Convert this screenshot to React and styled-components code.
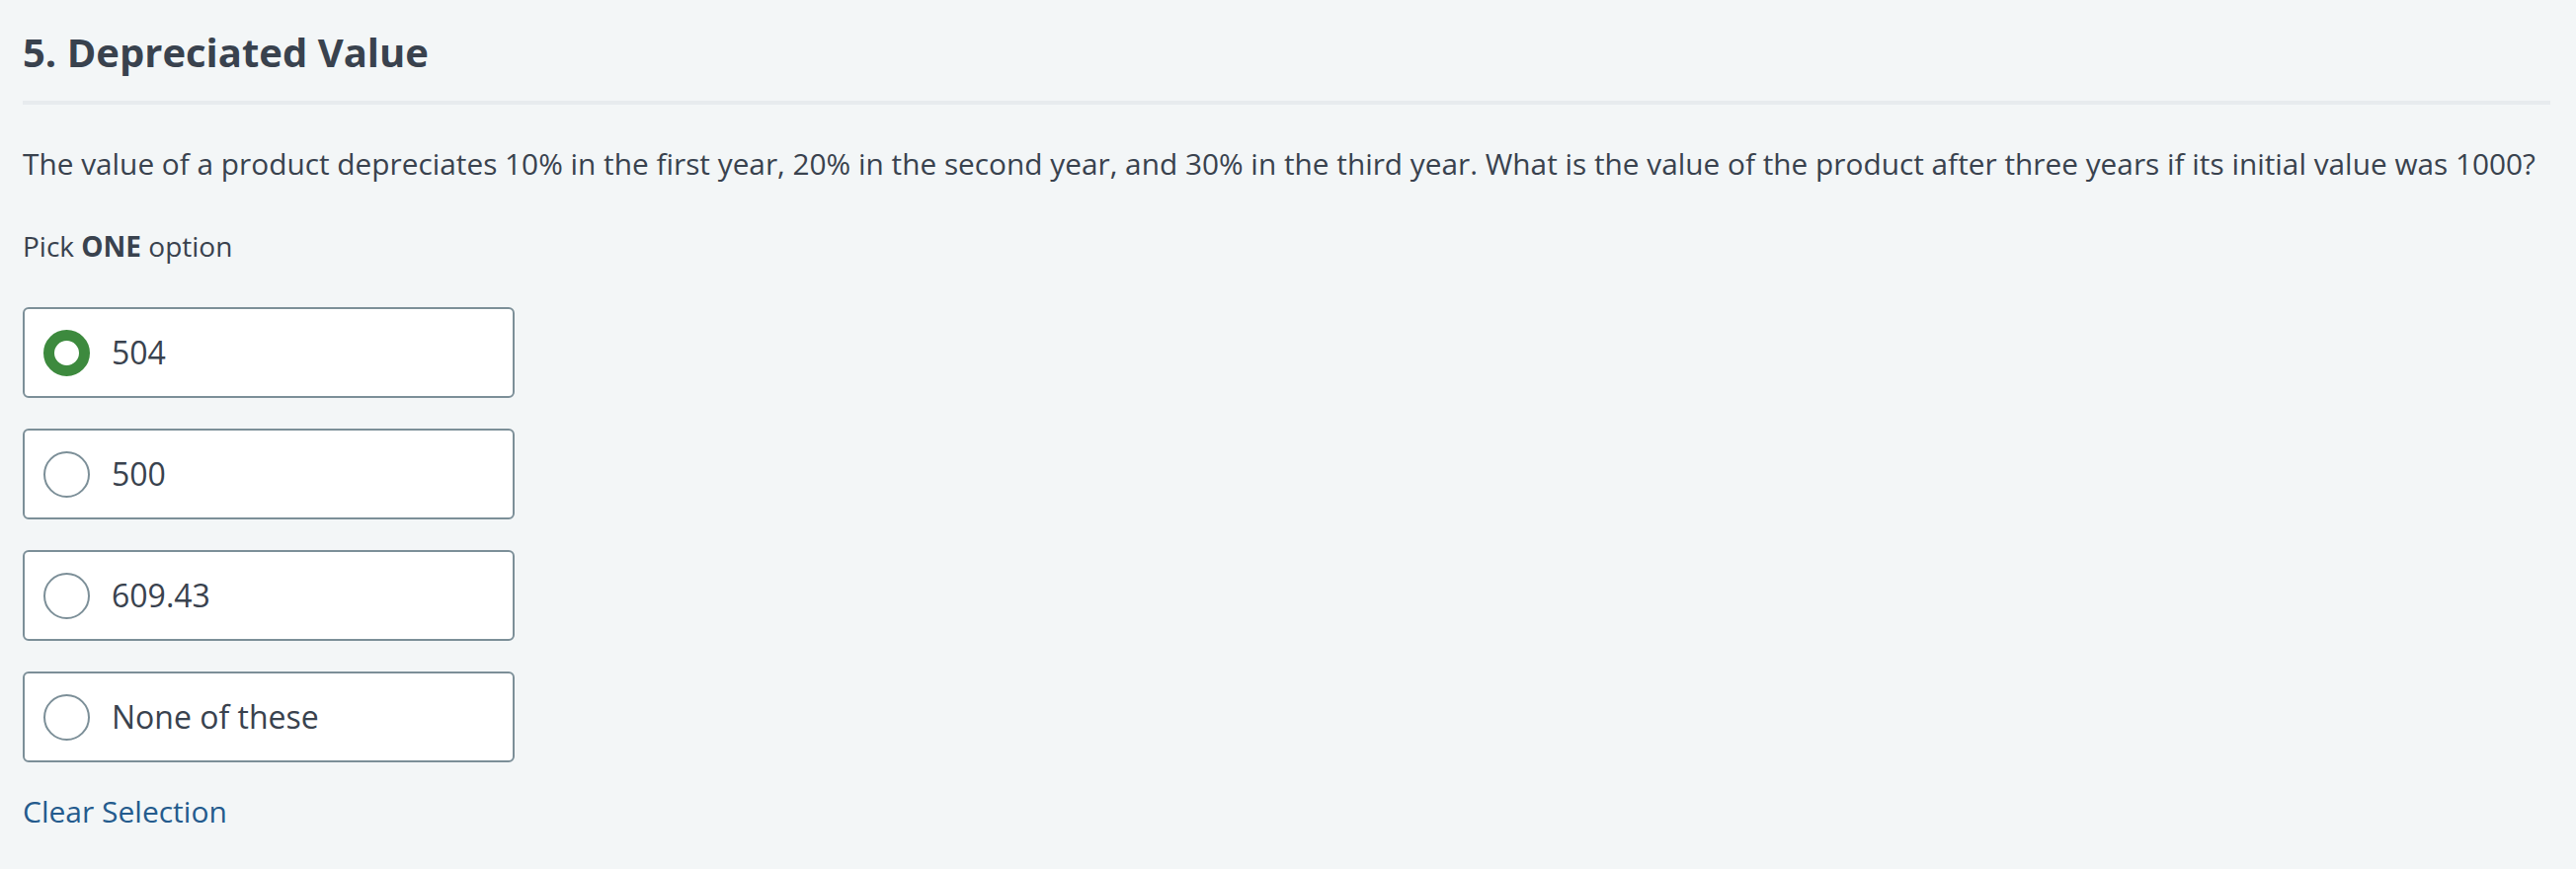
import React, { useState } from "react";
import styled, { createGlobalStyle } from "styled-components";

const GlobalStyle = createGlobalStyle`
  html, body {
    margin: 0;
    padding: 0;
    background: #f3f6f7;
  }
  body {
    font-family: "Open Sans", "Noto Sans", sans-serif;
    color: #39424e;
  }
`;

const Page = styled.div`
  padding: 29px 22px 40px 23px;
  background: #f3f6f7;
  min-height: 880px;
  box-sizing: border-box;
`;

const Header = styled.div`
  padding-bottom: 25px;
  border-bottom: 4px solid #e7ebee;
  margin-right: 4px;
`;

const Title = styled.h1`
  margin: 0;
  font-size: 40px;
  line-height: 48px;
  font-weight: 700;
  color: #39424e;
`;

const Question = styled.p`
  margin: 40px 0 0;
  font-size: 29.8px;
  line-height: 40px;
  color: #39424e;
`;

const Hint = styled.p`
  margin: 44px 0 0;
  font-size: 28px;
  line-height: 38px;
  color: #39424e;

  strong {
    font-weight: 700;
  }
`;

const OptionList = styled.div`
  margin-top: 43px;
  display: flex;
  flex-direction: column;
  gap: 31px;
`;

const Option = styled.label`
  box-sizing: border-box;
  width: 498px;
  height: 92px;
  display: flex;
  align-items: center;
  gap: 22px;
  padding-left: 19px;
  background: #ffffff;
  border: 2px solid #7c8f98;
  border-radius: 6px;
  cursor: pointer;
`;

const Radio = styled.span`
  box-sizing: border-box;
  flex: none;
  width: 47px;
  height: 47px;
  border-radius: 50%;
  background: #ffffff;
  border: ${(p) => (p.$checked ? "11px solid #3d8a3e" : "2px solid #7c8f98")};
`;

const OptionText = styled.span`
  font-size: 32px;
  line-height: 44px;
  color: #39424e;
`;

const ClearLink = styled.button`
  margin-top: 30px;
  padding: 0;
  border: none;
  background: none;
  font-family: "Open Sans", "Noto Sans", sans-serif;
  font-size: 30px;
  line-height: 40px;
  color: #245b8d;
  cursor: pointer;
  display: block;
`;

const options = ["504", "500", "609.43", "None of these"];

export default function App() {
  const [selected, setSelected] = useState(0);
  return (
    <>
      <GlobalStyle />
      <Page>
        <Header>
          <Title>5. Depreciated Value</Title>
        </Header>
        <Question>
          The value of a product depreciates 10% in the first year, 20% in the
          second year, and 30% in the third year. What is the value of the
          product after three years if its initial value was 1000?
        </Question>
        <Hint>
          Pick <strong>ONE</strong> option
        </Hint>
        <OptionList>
          {options.map((o, i) => (
            <Option key={o} onClick={() => setSelected(i)}>
              <Radio $checked={selected === i} />
              <OptionText>{o}</OptionText>
            </Option>
          ))}
        </OptionList>
        <ClearLink onClick={() => setSelected(null)}>Clear Selection</ClearLink>
      </Page>
    </>
  );
}
